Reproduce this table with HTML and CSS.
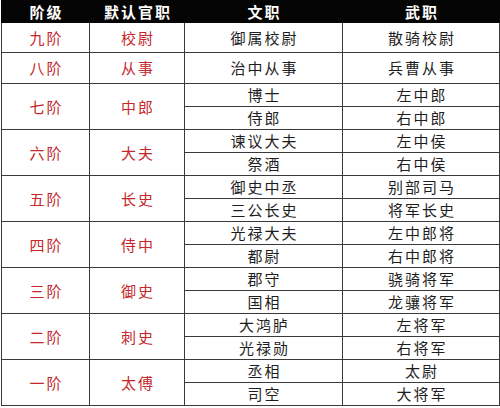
FILE: index.html
```html
<!DOCTYPE html>
<html lang="zh">
<head>
<meta charset="utf-8">
<link rel="stylesheet" href="styles.css">
</head>
<body>
<table class="ranks">
  <colgroup>
    <col class="c1"><col class="c2"><col class="c3"><col class="c4">
  </colgroup>
  <thead>
    <tr class="head"><th>阶级</th><th>默认官职</th><th>文职</th><th>武职</th></tr>
  </thead>
  <tbody>
    <tr class="tall"><td class="red">九阶</td><td class="red">校尉</td><td>御属校尉</td><td>散骑校尉</td></tr>
    <tr class="tall2"><td class="red">八阶</td><td class="red">从事</td><td>治中从事</td><td>兵曹从事</td></tr>
    <tr class="sub"><td class="red grp" rowspan="2">七阶</td><td class="red grp" rowspan="2">中郎</td><td>博士</td><td>左中郎</td></tr>
    <tr class="sub"><td>侍郎</td><td>右中郎</td></tr>
    <tr class="sub"><td class="red grp" rowspan="2">六阶</td><td class="red grp" rowspan="2">大夫</td><td>谏议大夫</td><td>左中侯</td></tr>
    <tr class="sub"><td>祭酒</td><td>右中侯</td></tr>
    <tr class="sub"><td class="red grp" rowspan="2">五阶</td><td class="red grp" rowspan="2">长史</td><td>御史中丞</td><td>别部司马</td></tr>
    <tr class="sub"><td>三公长史</td><td>将军长史</td></tr>
    <tr class="sub"><td class="red grp" rowspan="2">四阶</td><td class="red grp" rowspan="2">侍中</td><td>光禄大夫</td><td>左中郎将</td></tr>
    <tr class="sub"><td>都尉</td><td>右中郎将</td></tr>
    <tr class="sub"><td class="red grp" rowspan="2">三阶</td><td class="red grp" rowspan="2">御史</td><td>郡守</td><td>骁骑将军</td></tr>
    <tr class="sub"><td>国相</td><td>龙骧将军</td></tr>
    <tr class="sub"><td class="red grp" rowspan="2">二阶</td><td class="red grp" rowspan="2">刺史</td><td>大鸿胪</td><td>左将军</td></tr>
    <tr class="sub"><td>光禄勋</td><td>右将军</td></tr>
    <tr class="sub"><td class="red grp" rowspan="2">一阶</td><td class="red grp" rowspan="2">太傅</td><td>丞相</td><td>太尉</td></tr>
    <tr class="sub"><td>司空</td><td>大将军</td></tr>
  </tbody>
</table>
</body>
</html>
```
FILE: styles.css
```css
html, body {
  margin: 0;
  padding: 0;
  background: #ffffff;
}
body {
  padding-left: 1px;
  font-family: "Noto Sans CJK SC", "Noto Sans", sans-serif;
}
.ranks {
  width: 498px;
  border-collapse: collapse;
  table-layout: fixed;
  font-size: 15px;
  color: #1e1e1e;
}
.c1 { width: 88px; }
.c2 { width: 95px; }
.c3 { width: 158px; }
.c4 { width: 157px; }
.ranks th,
.ranks td {
  padding: 0 0 0 2px;
  text-align: center;
  vertical-align: middle;
  letter-spacing: 2px;
  line-height: 18px;
  border: 1px solid #3a3a3a;
}
.ranks th {
  background: #050505;
  color: #ffffff;
  font-weight: 700;
  height: 21px;
  border-color: #050505;
}
.tall td { height: 29px; }
.tall2 td { height: 30px; }
.sub td { height: 22px; }
.red {
  color: #c5282c;
}
```
